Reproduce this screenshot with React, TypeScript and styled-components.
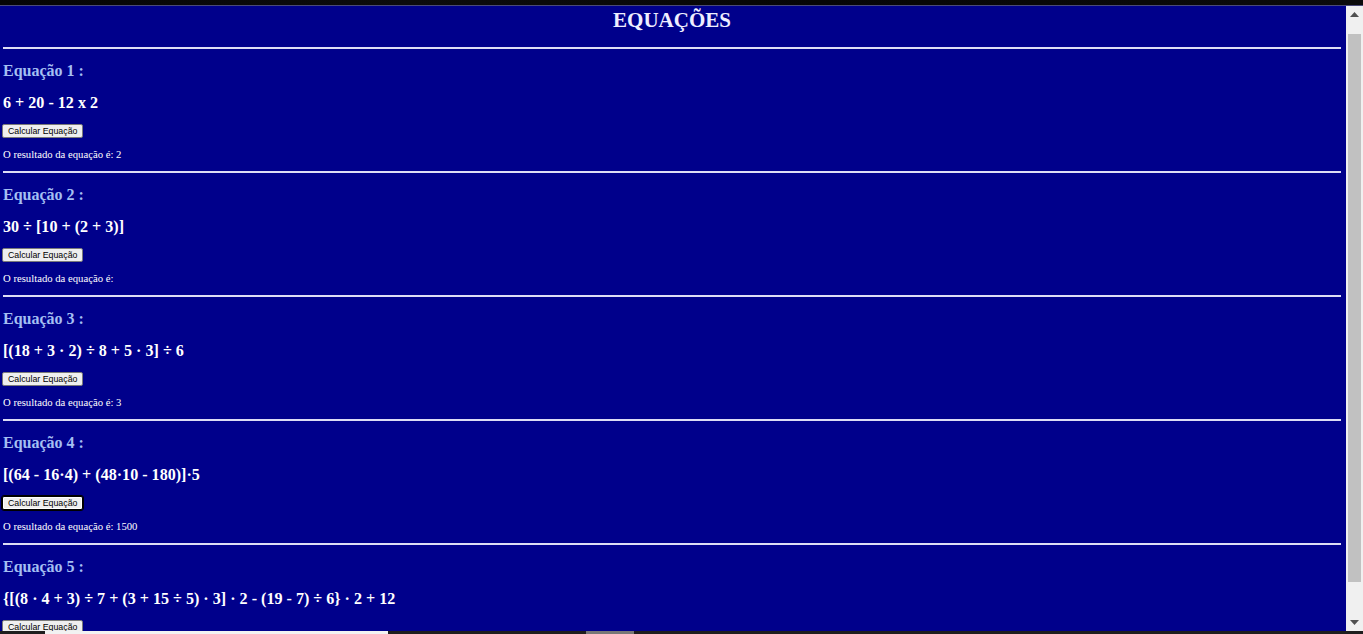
import React from "react";
import styled, { createGlobalStyle } from "styled-components";

const GlobalStyle = createGlobalStyle`
  html, body {
    margin: 0;
    padding: 0;
    overflow: hidden;
    background: #000;
  }
  * { box-sizing: border-box; }
`;

const Frame = styled.div`
  width: 1363px;
  height: 634px;
  display: flex;
  flex-direction: column;
  overflow: hidden;
`;

const TopStrip = styled.div`
  height: 6px;
  flex: none;
  background: linear-gradient(90deg, #050505 0%, #0c0c0c 30%, #060606 60%, #0b0b0b 100%);
  border-bottom: 1px solid #4a4a78;
`;

const Viewport = styled.div`
  flex: none;
  height: 625px;
  display: flex;
  flex-direction: row;
`;

const Page = styled.main`
  flex: 1;
  min-width: 0;
  background: #00008b;
  overflow: hidden;
  padding: 0 5px 0 3px;
`;

const Title = styled.h1`
  margin: 2px 0 15px;
  font-family: "Liberation Serif", "Times New Roman", serif;
  font-weight: 700;
  font-size: 21px;
  line-height: 24px;
  text-align: center;
  color: #eeeeff;
`;

const Section = styled.section`
  display: flex;
  flex-direction: column;
  align-items: flex-start;
  padding-bottom: 11px;
`;

const Rule = styled.hr`
  align-self: stretch;
  margin: 0;
  height: 2px;
  border: none;
  background: #dcdcf5;
`;

const Label = styled.h3`
  margin: 13px 0 0;
  font-family: "Liberation Serif", "Times New Roman", serif;
  font-weight: 700;
  font-size: 16px;
  line-height: 18px;
  color: #a4bff2;
`;

const Expr = styled.p`
  margin: 14px 0 0;
  font-family: "Liberation Serif", "Times New Roman", serif;
  font-weight: 700;
  font-size: 16.1px;
  line-height: 18px;
  color: #ffffff;
  white-space: nowrap;
`;

const CalcButton = styled.button<{ $focused?: boolean }>`
  margin: 12px 0 0 -1px;
  height: 14px;
  padding: 0 5px;
  font-family: "Liberation Sans", Arial, sans-serif;
  font-size: 8.8px;
  line-height: 12px;
  color: #000;
  background: #efefef;
  border: 1px solid ${(p) => (p.$focused ? "#000" : "#7a7a7a")};
  border-radius: 2px;
  outline: ${(p) => (p.$focused ? "1px solid #000" : "none")};
  box-shadow: ${(p) => (p.$focused ? "inset 0 0 0 1px #fff" : "none")};
  white-space: nowrap;
  cursor: default;
`;

const Result = styled.p`
  margin: 10px 0 0;
  font-family: "Liberation Serif", "Times New Roman", serif;
  font-size: 10.7px;
  line-height: 12px;
  color: #ffffff;
  white-space: nowrap;
`;

const Scrollbar = styled.div`
  flex: none;
  width: 17px;
  background: #f0f0f0;
  display: flex;
  flex-direction: column;
  align-items: center;
`;

const ArrowButton = styled.div`
  flex: none;
  height: 17px;
  width: 100%;
  display: flex;
  align-items: center;
  justify-content: center;
`;

const Thumb = styled.div<{ $offset: number; $size: number }>`
  flex: none;
  width: 13px;
  margin-top: ${(p) => p.$offset}px;
  height: ${(p) => p.$size}px;
  background: #c1c1c1;
`;

const Spacer = styled.div`
  flex: 1;
`;

const BottomStrip = styled.div`
  flex: none;
  height: 3px;
  display: flex;
  flex-direction: row;
  background: #1e1e1e;
`;

const StripSegment = styled.div<{ $width: number; $color: string; $gap: number }>`
  flex: none;
  margin-left: ${(p) => p.$gap}px;
  width: ${(p) => p.$width}px;
  background: ${(p) => p.$color};
`;

type Eq = { expr: string; result: string; focused?: boolean };

const equations: Eq[] = [
  { expr: "6 + 20 - 12 x 2", result: "2" },
  { expr: "30 ÷ [10 + (2 + 3)]", result: "" },
  { expr: "[(18 + 3 · 2) ÷ 8 + 5 · 3] ÷ 6", result: "3" },
  { expr: "[(64 - 16·4) + (48·10 - 180)]·5", result: "1500", focused: true },
  {
    expr: "{[(8 · 4 + 3) ÷ 7 + (3 + 15 ÷ 5) · 3] · 2 - (19 - 7) ÷ 6} · 2 + 12",
    result: "",
  },
];

const Triangle = ({ up }: { up: boolean }) => (
  <svg width="9" height="5" viewBox="0 0 9 5">
    <polygon points={up ? "0,5 4.5,0 9,5" : "0,0 9,0 4.5,5"} fill="#505050" />
  </svg>
);

export default function App() {
  return (
    <>
      <GlobalStyle />
      <Frame>
        <TopStrip />
        <Viewport>
          <Page>
            <Title>EQUAÇÕES</Title>
            {equations.map((eq, i) => (
              <Section key={i}>
                <Rule />
                <Label>Equação {i + 1} :</Label>
                <Expr>{eq.expr}</Expr>
                <CalcButton $focused={eq.focused}>Calcular Equação</CalcButton>
                <Result>O resultado da equação é: {eq.result}</Result>
              </Section>
            ))}
          </Page>
          <Scrollbar>
            <ArrowButton>
              <Triangle up />
            </ArrowButton>
            <Thumb $offset={11} $size={548} />
            <Spacer />
            <ArrowButton>
              <Triangle up={false} />
            </ArrowButton>
          </Scrollbar>
        </Viewport>
        <BottomStrip>
          <StripSegment $gap={45} $width={343} $color="#f2f2f2" />
          <StripSegment $gap={198} $width={48} $color="#777777" />
        </BottomStrip>
      </Frame>
    </>
  );
}
